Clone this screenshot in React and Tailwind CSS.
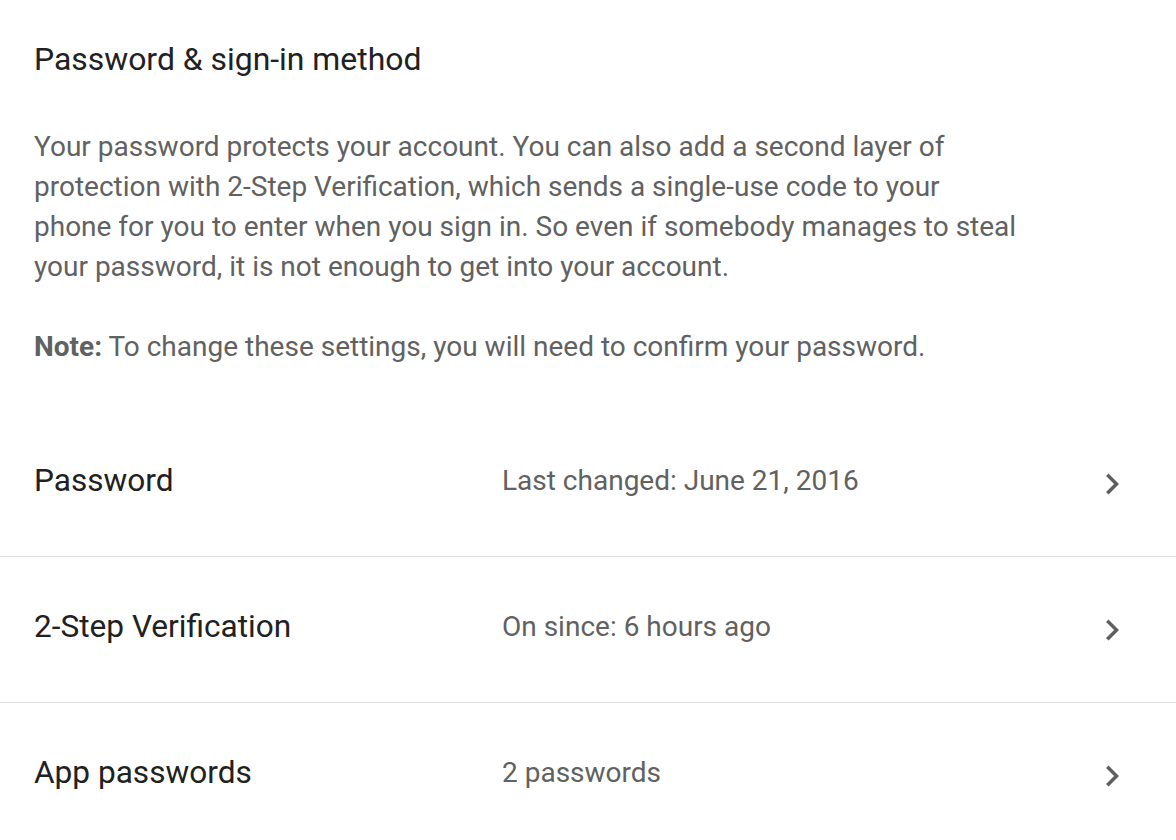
import React from 'react';

const rows = [
  { label: 'Password', value: 'Last changed: June 21, 2016' },
  { label: '2-Step Verification', value: 'On since: 6 hours ago' },
  { label: 'App passwords', value: '2 passwords' },
];

function Chevron() {
  return (
    <svg className="w-[42px] h-[42px] text-[#5f5f5f]" viewBox="0 0 24 24" fill="currentColor">
      <path d="M10 6L8.59 7.41 13.17 12l-4.58 4.59L10 18l6-6z" />
    </svg>
  );
}

export default function App() {
  return (
    <div className="min-h-screen w-full bg-white font-['Roboto',sans-serif] overflow-hidden">
      {/* Intro */}
      <div className="pl-[34px] pt-[39px]">
        <h1 className="text-[31.9px] leading-[40px] text-[#212121]">Password &amp; sign-in method</h1>
        <p className="mt-[48px] max-w-[983px] text-[28px] leading-[40px] text-[#616161]">
          Your password protects your account. You can also add a second layer of protection with 2-Step
          Verification, which sends a single-use code to your phone for you to enter when you sign in. So even if
          somebody manages to steal your password, it is not enough to get into your account.
        </p>
        <p className="mt-[40px] text-[28px] leading-[40px] text-[#616161]">
          <span className="font-bold">Note:</span> To change these settings, you will need to confirm your password.
        </p>
      </div>

      {/* Rows */}
      <div className="mt-[44px]">
        {rows.map((row, i) => (
          <div
            key={row.label}
            className={`flex items-center h-[146px] pl-[34px] pr-[43px] ${i < rows.length - 1 ? 'border-b border-[#e0e0e0]' : ''}`}
          >
            <div className="w-[468px] text-[31.6px] text-[#212121] -mt-[6px]">{row.label}</div>
            <div className="flex-1 text-[28px] text-[#616161] -mt-[6px]">{row.value}</div>
            <Chevron />
          </div>
        ))}
      </div>
    </div>
  );
}
